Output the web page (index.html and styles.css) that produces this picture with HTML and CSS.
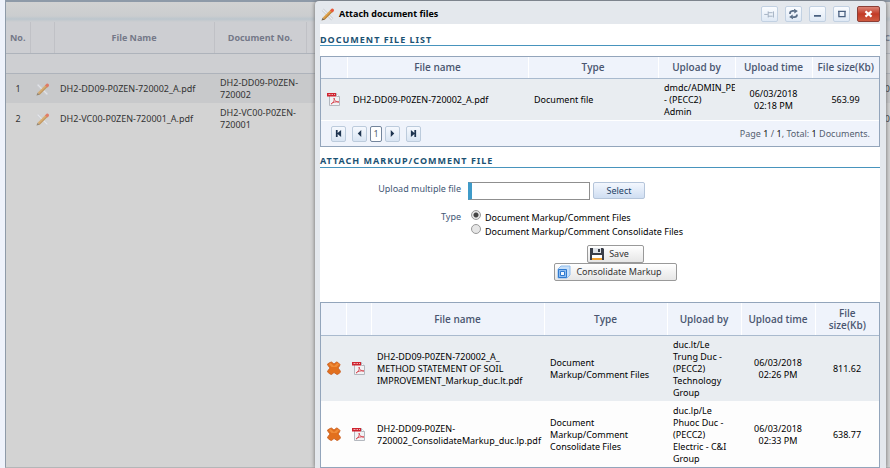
FILE: index.html
```html
<!DOCTYPE html>
<html lang="en">
<head>
<meta charset="utf-8">
<title>Attach document files</title>
<link rel="stylesheet" href="styles.css">
</head>
<body>
<svg class="defs" aria-hidden="true">
  <symbol id="pencil" viewBox="0 0 16 16">
    <path d="M2 2l12 12" stroke="#ccd0d6" stroke-width="3.500"/>
    <path d="M2 2l12 12" stroke="#eef0f2" stroke-width="1.500"/>
    <path d="M2 12L11.500 2.500l2.500 2.500L4.500 14.500z" fill="#dda24c"/>
    <path d="M3.500 13.500L13 4l1 1-9.500 9.500z" fill="#b98038"/>
    <path d="M11 3l2-2q1.500-1 2.500.5t0 2.500l-1.500 1.500z" fill="#e8583a"/>
    <path d="M2 12l2.500 2.500-4 1z" fill="#7c6a50"/>
  </symbol>
  <symbol id="pdf" viewBox="0 0 14 14">
    <path d="M2.500 1.500h7l3 3v9h-10z" fill="#f1f2f4" stroke="#b4b8bf"/>
    <path d="M9.500 1.500v3h3" fill="#fff" stroke="#b4b8bf"/>
    <path d="M0 1h9v3.500H0z" fill="#cf2430"/>
    <path d="M1.500 2.500h2M4.500 2.500h1.500M7 2.500h1" stroke="#f0b0b4" stroke-width="1"/>
    <path d="M4 12c2-1 4-4 3-6 0 3 3 4 5 4-3-.5-6 0-8 2z" fill="none" stroke="#d9505a"/>
  </symbol>
  <symbol id="remove" viewBox="0 0 14 14">
    <path d="M3 1.500l1.500-.5L7 3l2.500-2 1.500.5 2 2-.5 1.500L11 7l2 2.500.5 1.500-2 2-1.500.5L7 11.500 4.500 13.500 3 13 .5 11 1 9.500 3 7 1 4.500.5 3z" fill="#e2701e" stroke="#c85a1c" stroke-width=".8"/>
    <path d="M2 3l1.500-1L7 5l3.500-3L12 3.500 9.500 6h-5z" fill="#f08c38"/>
  </symbol>
</svg>

<main class="page">
  <div class="toolbar"></div>
  <table class="docs">
    <colgroup><col class="d-no"><col class="d-edit"><col class="d-file"><col class="d-doc"><col></colgroup>
    <thead>
      <tr><th>No.</th><th></th><th>File Name</th><th>Document No.</th><th class="edge">C</th></tr>
      <tr class="filter"><td colspan="5"></td></tr>
    </thead>
    <tbody>
      <tr class="alt"><td class="mid">1</td><td class="mid"><svg class="ic13"><use href="#pencil"/></svg></td><td>DH2-DD09-P0ZEN-720002_A.pdf</td><td>DH2-DD09-P0ZEN-<br>720002</td><td class="edge">0</td></tr>
      <tr><td class="mid">2</td><td class="mid"><svg class="ic13"><use href="#pencil"/></svg></td><td>DH2-VC00-P0ZEN-720001_A.pdf</td><td>DH2-VC00-P0ZEN-<br>720001</td><td class="edge">0</td></tr>
    </tbody>
  </table>
</main>

<section class="window" role="dialog" aria-labelledby="win-title">
  <header class="titlebar">
    <svg class="ic13"><use href="#pencil"/></svg>
    <h1 id="win-title">Attach document files</h1>
    <div class="controls">
      <button aria-label="Pin"><svg viewBox="0 0 16 16"><path d="M2 8.500h4M6.500 5v7M6.500 6.500h5M6.500 10.500h5M12.500 5v7" fill="none" stroke="#9aa9bb"/></svg></button>
      <button aria-label="Reload"><svg viewBox="0 0 16 16"><path d="M4 8V7q0-2 3-2.500h2M12 8.500q0 3-3 3H7" fill="none" stroke="#5a6e88" stroke-width="2"/><path d="M8.500 2l4.500 2.500-4 3zM7.500 14L3 11.500l4-3z" fill="#5a6e88"/></svg></button>
      <button aria-label="Minimize"><svg viewBox="0 0 16 16"><path d="M4 10h8" stroke="#4a6180" stroke-width="2"/></svg></button>
      <button aria-label="Maximize"><svg viewBox="0 0 16 16"><path d="M5 5h7v6H5zM4 5h9" fill="none" stroke="#4a6180" stroke-width="1.500"/></svg></button>
      <button class="close" aria-label="Close"><svg viewBox="0 0 16 16"><path d="M4.500 5l7 6M11.500 5l-7 6" stroke="#fff" stroke-width="2.500"/></svg></button>
    </div>
  </header>
  <div class="content">
    <h2>DOCUMENT FILE LIST</h2>
    <div class="grid first">
      <table>
        <colgroup><col class="a-icon"><col><col class="a-type"><col class="a-by"><col class="a-time"><col class="a-size"></colgroup>
        <thead><tr><th></th><th>File name</th><th>Type</th><th>Upload by</th><th>Upload time</th><th>File size(Kb)</th></tr></thead>
        <tbody>
          <tr class="alt"><td class="mid"><svg class="ic14"><use href="#pdf"/></svg></td><td>DH2-DD09-P0ZEN-720002_A.pdf</td><td>Document file</td><td>dmdc/ADMIN_PE<br>- (PECC2)<br>Admin</td><td class="mid">06/03/2018 02:18 PM</td><td class="mid">563.99</td></tr>
        </tbody>
      </table>
      <div class="pager">
        <button aria-label="First page"><svg viewBox="0 0 8 8"><path d="M1 0h2v3.500L7 0v8L3 4.500V8H1z"/></svg></button>
        <button class="gap" aria-label="Previous page"><svg viewBox="0 0 8 8"><path d="M6 0v8L2 4z"/></svg></button>
        <button class="current">1</button>
        <button aria-label="Next page"><svg viewBox="0 0 8 8"><path d="M2 0v8l4-4z"/></svg></button>
        <button class="gap" aria-label="Last page"><svg viewBox="0 0 8 8"><path d="M7 0H5v3.500L1 0v8l4-3.500V8h2z"/></svg></button>
        <span class="info">Page <b>1</b> / <b>1</b>, Total: <b>1</b> Documents.</span>
      </div>
    </div>

    <h2>ATTACH MARKUP/COMMENT FILE</h2>
    <form class="form">
      <div class="row upload">
        <label class="name" for="upload">Upload multiple file</label>
        <input id="upload" type="text">
        <button type="button" class="select">Select</button>
      </div>
      <div class="row" role="radiogroup" aria-labelledby="type-label">
        <span class="name" id="type-label">Type</span>
        <div class="choices">
          <label><input type="radio" name="type" checked>Document Markup/Comment Files</label>
          <label><input type="radio" name="type">Document Markup/Comment Consolidate Files</label>
        </div>
      </div>
      <div class="actions">
        <button type="button"><svg class="ic14" viewBox="0 0 14 14"><path d="M0 1h13l1 1v11H0z" fill="#3a3e48"/><path d="M3 1h8v5H3z" fill="#dfe3e8"/><path d="M8 2h2v3H8z" fill="#3a3e48"/><path d="M2 8h10v5H2z" fill="#fff"/><path d="M2 11h10v2H2z" fill="#f0a030"/></svg>Save</button>
        <button type="button"><svg class="ic14" viewBox="0 0 14 14"><path d="M4 1h9v9l-3 3H1V4z" fill="#c8e0f9" stroke="#8fbcec"/><path d="M1.500 4.500h8v8h-8z" fill="#8fbdf0" stroke="#2f7ad0"/><path d="M3.500 6.500h4v4h-4z" fill="#f4f9ff" stroke="#2f7ad0"/></svg>Consolidate Markup</button>
      </div>
    </form>

    <div class="grid second">
      <table>
        <colgroup><col class="b-icon"><col class="b-icon"><col><col class="b-type"><col class="b-by"><col class="b-time"><col class="b-size"></colgroup>
        <thead><tr><th></th><th></th><th>File name</th><th>Type</th><th>Upload by</th><th>Upload time</th><th>File size(Kb)</th></tr></thead>
        <tbody>
          <tr class="alt"><td class="mid"><svg class="ic14"><use href="#remove"/></svg></td><td class="mid"><svg class="ic14"><use href="#pdf"/></svg></td><td>DH2-DD09-P0ZEN-720002_A_<br>METHOD STATEMENT OF SOIL<br>IMPROVEMENT_Markup_duc.lt.pdf</td><td>Document<br>Markup/Comment Files</td><td>duc.lt/Le<br>Trung Duc -<br>(PECC2)<br>Technology<br>Group</td><td class="mid">06/03/2018 02:26 PM</td><td class="mid">811.62</td></tr>
          <tr><td class="mid"><svg class="ic14"><use href="#remove"/></svg></td><td class="mid"><svg class="ic14"><use href="#pdf"/></svg></td><td>DH2-DD09-P0ZEN-<br>720002_ConsolidateMarkup_duc.lp.pdf</td><td>Document<br>Markup/Comment<br>Consolidate Files</td><td>duc.lp/Le<br>Phuoc Duc -<br>(PECC2)<br>Electric - C&amp;I<br>Group</td><td class="mid">06/03/2018 02:33 PM</td><td class="mid">638.77</td></tr>
        </tbody>
      </table>
    </div>
  </div>
</section>
</body>
</html>
```
FILE: styles.css
```css
* { box-sizing: border-box; }
body {
  margin: 0;
  height: 100vh;
  overflow: hidden;
  background: #eef2fb;
  color: #000;
  font: 9px/12px "Noto Sans", sans-serif;
}
button, input { font: inherit; color: inherit; margin: 0; }
svg { display: block; }
.defs { display: none; }
.ic13 { width: 13px; height: 13px; }
.ic14 { width: 14px; height: 14px; }
.mid { text-align: center; }
.mid svg { margin: 0 auto; }
table { width: 100%; border-collapse: collapse; table-layout: fixed; }
th { font: 600 10px/12px "Open Sans", sans-serif; color: #4a5670; padding: 0 4px; }
td { padding: 2px 0 0 6px; vertical-align: middle; overflow: hidden; }

.page {
  height: 100%;
  margin-left: 5px;
  border: 1px solid #8e9aa8;
  border-right: 0;
  border-top-width: 2px;
  border-bottom-color: #b4b6b8;
  background: #d3d3d3;
}
.toolbar { height: 20px; background: linear-gradient(#d2d2d2, #cbcdcf 70%, #bcc6cd 85%, #cdced1); }
.docs th { height: 31px; padding: 2px 0 0; border-right: 1px solid #c0c1c6; border-bottom: 1px solid #aeb3bb; background: #cdced2; color: #747888; font-size: 9px; font-weight: 700; }
.docs .filter td { height: 20px; border-bottom: 1px solid #aeb3bb; background: #cecfd2; }
.docs tbody td { height: 30px; color: #333; }
.docs tbody .ic13 { opacity: .7; }
.docs .alt { background: #c8c9cb; }
.docs .mid { padding: 2px 0 0; }
.docs .edge { padding: 2px 0 0; text-align: right; border-right: 0; }
.d-no { width: 24px; }
.d-edit { width: 24px; }
.d-file { width: 160px; }
.d-doc { width: 92px; }

.window {
  display: flex;
  flex-direction: column;
  position: absolute;
  top: 1px;
  left: 315px;
  right: 4px;
  bottom: 0;
  overflow: hidden;
  padding: 0 6px 0 5px;
  border-radius: 4px 4px 0 0;
  background: #e4e8ed;
  box-shadow: 0 0 4px #666;
}
.titlebar { display: flex; flex: none; align-items: center; height: 23px; padding: 3px 0 0 1px; gap: 5px; }
.titlebar h1 { flex: 1; margin: 0; font: 700 9px/12px "Open Sans", sans-serif; }
.controls { display: flex; gap: 7px; }
.controls button {
  width: 17px; height: 16px; padding: 0;
  border: 1px solid #c2d1e2; border-radius: 2px;
  background: linear-gradient(#fafcff, #dfe9f5);
}
.controls svg { width: 15px; height: 14px; }
.controls .close { width: 23px; border-color: #8c3f36; background: linear-gradient(#dc8476, #c23a26 50%, #cf5a40); }
.controls .close svg { margin: 0 auto; }
.content { flex: 1; min-height: 0; background: #fff; }

h2 {
  margin: 0;
  height: 22px;
  padding-top: 10px;
  border-bottom: 1px solid #4794bd;
  color: #1b5273;
  font: 700 9px/12px "Noto Sans", sans-serif;
  letter-spacing: 1px;
}
.grid { border: 1px solid #93a5bb; background: #fdfdfd; }
.grid th { border-right: 1px solid #fff; border-bottom: 1px solid #a9bace; background: #eff3fb; }
.grid th:last-child { border-right: 0; }
.grid .mid { padding: 2px 8px 0; }
.grid .mid:has(svg) { padding: 0; }
.grid .alt { background: #e9edf1; }
.first { margin-top: 10px; }
.first th { height: 21px; }
.first td { height: 42px; }
.a-icon { width: 26px; }
.a-type { width: 130px; }
.a-by { width: 77px; }
.a-time { width: 77px; }
.a-size { width: 67px; }
.pager { display: flex; align-items: center; height: 26px; gap: 3px; padding: 0 9px 0 10px; border-top: 1px solid #fff; background: #eff3fb; color: #555f70; }
.pager button {
  display: flex; align-items: center; justify-content: center;
  width: 15px; height: 16px; padding: 0;
  border: 1px solid #bccbdc; border-radius: 2px;
  background: linear-gradient(#f6f9fe, #d9e5f3);
}
.pager button svg { width: 7px; height: 7px; fill: #1e3450; }
.pager .current { width: 12px; border-color: #73859c; background: #fff; }
.pager .gap { margin-left: 3px; }
.pager .info { margin-left: auto; }
.pager b { font-weight: 400; color: #111; }

.first + h2 { height: 21px; padding-top: 8px; }
.form { padding-top: 14px; color: #000; }
.row { display: flex; align-items: flex-start; }
.name { width: 141px; padding-top: 1px; text-align: right; color: #3f5876; }
.upload { height: 28px; }
.upload input { width: 122px; height: 18px; margin: 0 3px 0 7px; border: 1px solid #8f8f8f; border-left: 4px solid #3f9bc9; }
.select { width: 52px; height: 17px; padding: 0; border: 1px solid #b5c5da; border-radius: 2px; background: linear-gradient(#f3f7fe, #cfdef2); color: #223f66; }
.choices { padding-left: 10px; }
.choices label { display: flex; gap: 4px; height: 14px; line-height: 15px; }
.choices input {
  appearance: none;
  width: 10px; height: 10px;
  border: 1px solid #999; border-radius: 50%;
  background: #e6e6e6;
}
.choices input:checked { background: radial-gradient(circle, #444 0 2px, #e6e6e6 3px); }
.actions { display: flex; flex-direction: column; align-items: center; margin-left: 31px; padding-top: 7px; }
.actions button {
  display: flex; align-items: center; gap: 5px;
  height: 18px; padding: 0 14px 0 2px;
  border: 1px solid #999; border-radius: 2px;
  background: linear-gradient(#fff, #e6e6e6);
  color: #333;
}
.second { margin-top: 21px; }
.second th { height: 32px; }
.second td { height: 66px; }
.b-icon { width: 25px; }
.b-type { width: 123px; }
.b-by { width: 74px; }
.b-time { width: 74px; }
.b-size { width: 64px; }
```
